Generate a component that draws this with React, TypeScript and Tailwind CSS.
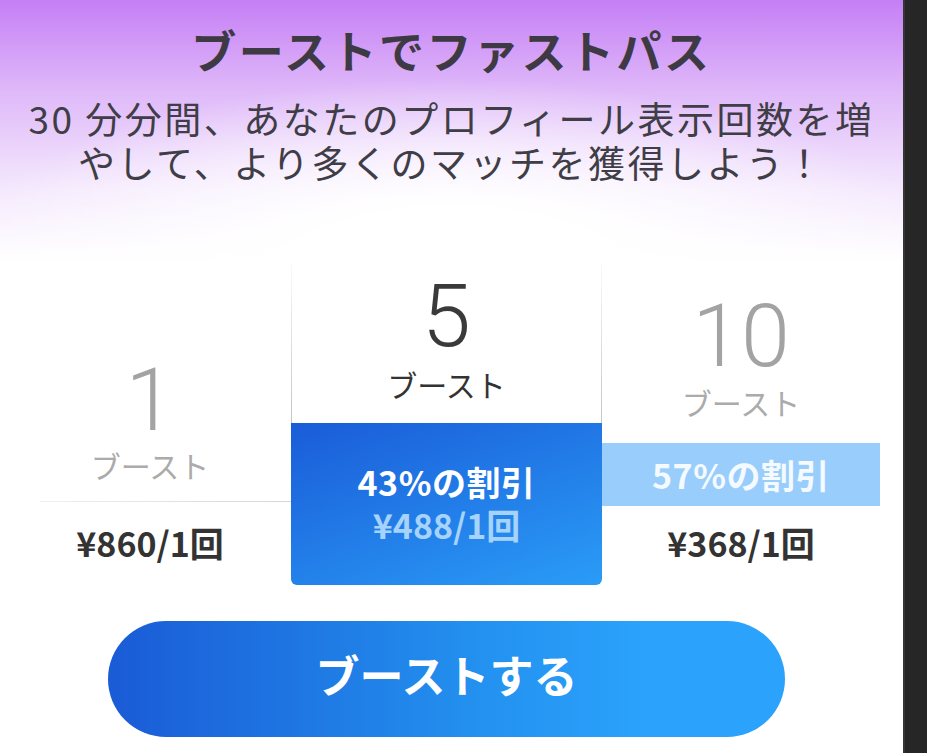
import React from "react";

const JP = "font-['Noto_Sans_CJK_JP','Noto_Sans',sans-serif]";
const NUM = "font-['Roboto','Noto_Sans',sans-serif] font-light";

export default function App() {
  return (
    <div className={`flex min-h-[753px] w-full bg-[#262626] ${JP}`}>
      <div className="flex w-[903px] flex-col bg-white">
        {/* header with purple fade */}
        <div className="bg-[radial-gradient(ellipse_55%_70%_at_50%_100%,#ffffff_30%,rgba(255,255,255,0)_100%),linear-gradient(to_bottom,#c57ff5_0%,#dfb9f9_35%,#f4e8fd_72%,#ffffff_100%)] pt-[22px] pb-[79px] text-center">
          <h1 className="text-[45px] font-bold leading-[56px] tracking-[2.5px] text-[#3d3a44]">
            ブーストでファストパス
          </h1>
          <p className="mt-[18px] text-[37px] leading-[44px] tracking-[2.5px] text-[#3f3d46]">
            30 分分間、あなたのプロフィール表示回数を増
            <br />
            やして、より多くのマッチを獲得しよう！
          </p>
        </div>

        {/* plans */}
        <div className="ml-[9px] flex items-start">
          {/* 1 boost */}
          <div className="flex w-[282px] flex-col text-center">
            <div className={`mt-[93px] text-[88px] leading-[88px] text-[#a3a3a3] ${NUM}`}>1</div>
            <div className="mt-[3px] text-[30px] leading-[36px] text-[#ababab]">ブースト</div>
            <div className="ml-[31px] mt-[18px] h-px bg-[linear-gradient(to_right,#f0f0f0,#d6d6d6)]" />
            <div className="mt-[22px] text-[34px] font-bold leading-[38px] text-[#333]">¥860/1回</div>
          </div>

          {/* 5 boosts */}
          <div className="flex w-[311px] flex-col">
            <div className="bg-[linear-gradient(to_bottom,#fafafa,#c4c4c4)] px-px">
              <div className="bg-white pt-[9px] pb-[21px] text-center">
                <div className={`text-[88px] leading-[88px] text-[#3a3a3a] ${NUM}`}>5</div>
                <div className="mt-[6px] text-[30px] leading-[36px] text-[#333]">ブースト</div>
              </div>
            </div>
            <div className="h-[162px] rounded-b-[6px] bg-[linear-gradient(160deg,#1a5cd8_0%,#2a9cf7_100%)] pt-[39px] text-center">
              <div className="text-[34px] font-bold leading-[40px] tracking-[0.5px] text-white">43%の割引</div>
              <div className="mt-[4px] text-[34px] font-bold leading-[38px] text-[#a6d3fb]">¥488/1回</div>
            </div>
          </div>

          {/* 10 boosts */}
          <div className="flex w-[278px] flex-col text-center">
            <div className={`mt-[29px] text-[88px] leading-[88px] text-[#a3a3a3] ${NUM}`}>10</div>
            <div className="mt-[4px] text-[30px] leading-[36px] text-[#ababab]">ブースト</div>
            <div className="mt-[23px] flex h-[63px] items-center justify-center bg-[#99cdfc]">
              <span className="text-[34px] font-bold tracking-[0.5px] text-[#f4faff]">57%の割引</span>
            </div>
            <div className="mt-[18px] text-[34px] font-bold leading-[38px] text-[#333]">¥368/1回</div>
          </div>
        </div>

        {/* cta */}
        <button className="ml-[108px] mt-[36px] flex h-[116px] w-[677px] items-center justify-center rounded-full bg-[linear-gradient(to_right,#1a5bd6_0%,#2391ef_55%,#2ba3fd_80%,#2ba3fd_100%)] pb-[10px]">
          <span className="text-[44px] font-bold leading-[44px] text-white">ブーストする</span>
        </button>
      </div>
      <div className="flex-1 border-l-2 border-[#353535]" />
    </div>
  );
}
